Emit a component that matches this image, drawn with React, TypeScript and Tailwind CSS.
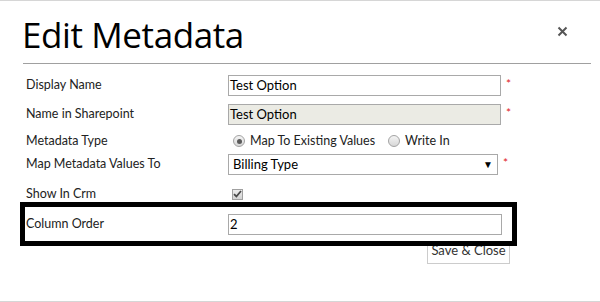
import React from 'react';

const Star = () => <span className="text-[#e0211d] text-[12px] leading-none ml-[5px] mt-[-4px]">*</span>;

function Radio({ checked }: { checked?: boolean }) {
  return (
    <span className="w-[12px] h-[12px] rounded-full border border-[#a3a3a3] bg-gradient-to-b from-[#f4f4f4] to-[#d8d8d8] flex items-center justify-center">
      {checked && <span className="w-[5px] h-[5px] rounded-full bg-[#5a5a5a]" />}
    </span>
  );
}

export default function App() {
  const label = 'w-[202px] shrink-0 text-[12.5px] text-[#222]';
  const input = 'h-[21px] border border-[#a9a9a9] px-[1px] text-[13px] leading-[19px] text-black flex items-center';

  return (
    <div className="w-[600px] h-[302px] bg-white border-t border-b border-[#d6d6d6] font-['Lato','Open_Sans',sans-serif] overflow-hidden">
      {/* header */}
      <div className="flex items-start justify-between pl-[22px] pr-[32px] pt-[12px] h-[50px]">
        <h1 className="font-['Open_Sans',sans-serif] text-[35px] font-normal leading-[44px] text-black tracking-[-0.4px]">Edit Metadata</h1>
        <svg className="mt-[13px]" width="11" height="11" viewBox="0 0 11 11">
          <path d="M1.5 1.5 L9.5 9.5 M9.5 1.5 L1.5 9.5" stroke="#555" strokeWidth="2" />
        </svg>
      </div>
      <div className="ml-[23px] w-[568px] h-px bg-[#a0a0a0] mt-[12px]" />

      {/* form */}
      <div className="pl-[26px] mt-[11px] flex flex-col">
        <div className="flex items-center h-[21px]">
          <span className={label}>Display Name</span>
          <div className={`${input} w-[273px]`}>Test Option</div>
          <Star />
        </div>
        <div className="flex items-center h-[21px] mt-[8px]">
          <span className={label}>Name in Sharepoint</span>
          <div className={`${input} w-[273px] bg-[#ebebe4] text-[#707070]`}>Test Option</div>
          <Star />
        </div>
        <div className="flex items-center h-[22px] mt-[5px]">
          <span className={label}>Metadata Type</span>
          <div className="flex items-center text-[12.5px] text-[#222] ml-[5px]">
            <Radio checked />
            <span className="ml-[5px]">Map To Existing Values</span>
            <span className="ml-[13px]"><Radio /></span>
            <span className="ml-[5px]">Write In</span>
          </div>
        </div>
        <div className="flex items-center h-[21px] mt-[2px]">
          <span className={label}>Map Metadata Values To</span>
          <div className={`${input} w-[270px] justify-between pl-[4px] pr-[4px]`}>
            <span>Billing Type</span>
            <span className="text-[10px] text-black">▼</span>
          </div>
          <Star />
        </div>
        <div className="flex items-center h-[16px] mt-[11px]">
          <span className={label}>Show In Crm</span>
          <span className="ml-[4px] w-[11px] h-[11px] border border-[#a0a0a0] bg-gradient-to-b from-[#ececec] to-[#d3d3d3] flex items-center justify-center">
            <svg width="9" height="8" viewBox="0 0 9 8">
              <path d="M1 4.2 L3.4 6.5 L8 1" stroke="#4a4a4a" strokeWidth="1.8" fill="none" />
            </svg>
          </span>
        </div>
      </div>

      <div className="relative z-10 ml-[20px] w-[497px] h-[44px] border-[5px] border-black bg-white flex items-center pl-[1px]">
        <span className={label}>Column Order</span>
        <div className={`${input} w-[274px]`}>2</div>
      </div>
      <button className="ml-[427px] mt-[-7px] h-[25px] w-[83px] border border-[#cccccc] bg-white text-[13px] text-[#333] flex items-end justify-center pb-[3px]">
        Save &amp; Close
      </button>
    </div>
  );
}
